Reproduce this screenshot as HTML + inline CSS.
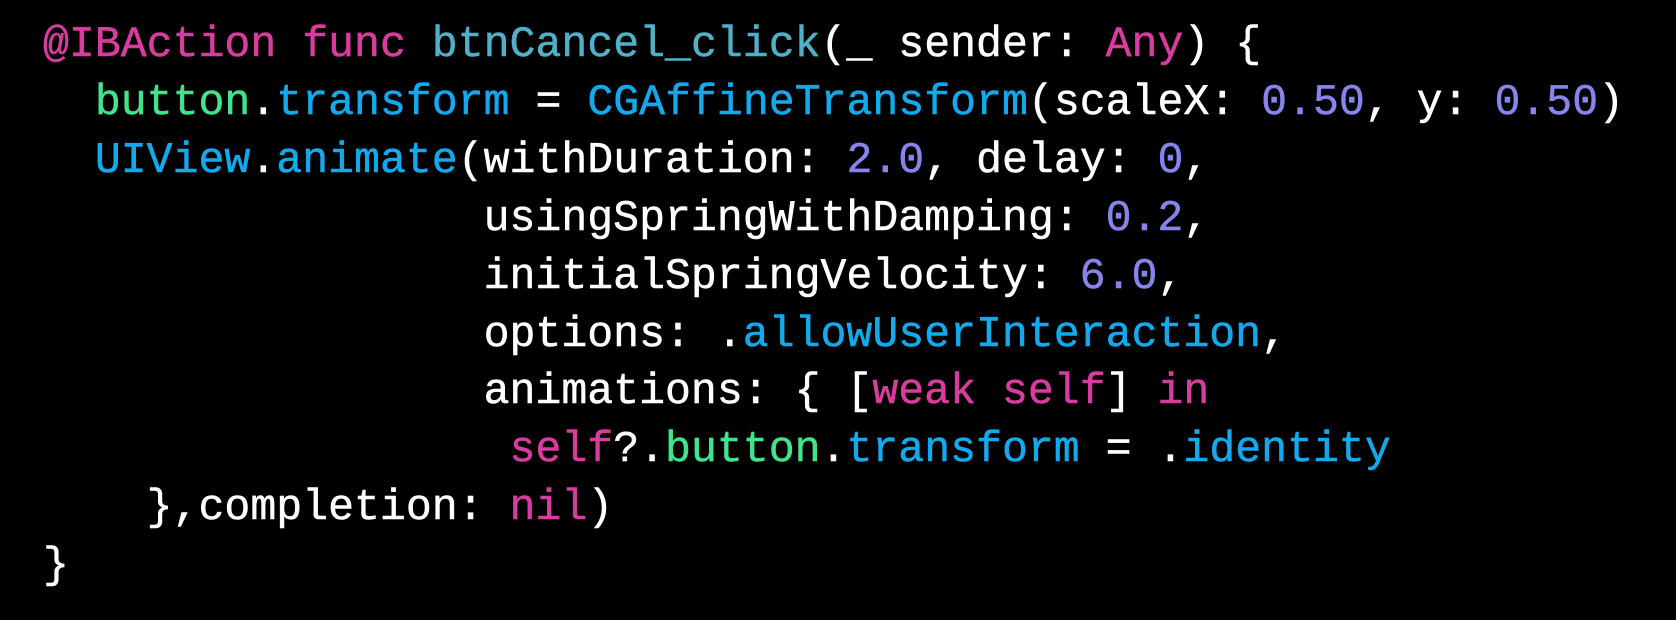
<!DOCTYPE html>
<html><head><meta charset="utf-8"><style>
html,body{margin:0;padding:0;background:#000;width:1676px;height:620px;overflow:hidden}
pre{margin:0;position:absolute;left:43px;top:16px;font-family:"Liberation Mono",monospace;font-size:43.2px;line-height:57.9px;color:#fff;-webkit-text-stroke:0.5px currentColor}
.k{color:#d93c9f}.f{color:#4fb1c9}.g{color:#3fe48c}.b{color:#12aaee}.n{color:#8585ec}
</style></head><body><pre><span class="k">@IBAction</span> <span class="k">func</span> <span class="f">btnCancel_click</span>(_ sender: <span class="k">Any</span>) {
  <span class="g">button</span>.<span class="b">transform</span> = <span class="b">CGAffineTransform</span>(scaleX: <span class="n">0.50</span>, y: <span class="n">0.50</span>)
  <span class="b">UIView</span>.<span class="b">animate</span>(withDuration: <span class="n">2.0</span>, delay: <span class="n">0</span>,
                 usingSpringWithDamping: <span class="n">0.2</span>,
                 initialSpringVelocity: <span class="n">6.0</span>,
                 options: .<span class="b">allowUserInteraction</span>,
                 animations: { [<span class="k">weak</span> <span class="k">self</span>] <span class="k">in</span>
                  <span class="k">self</span>?.<span class="g">button</span>.<span class="b">transform</span> = .<span class="b">identity</span>
    },completion: <span class="k">nil</span>)
}</pre></body></html>
